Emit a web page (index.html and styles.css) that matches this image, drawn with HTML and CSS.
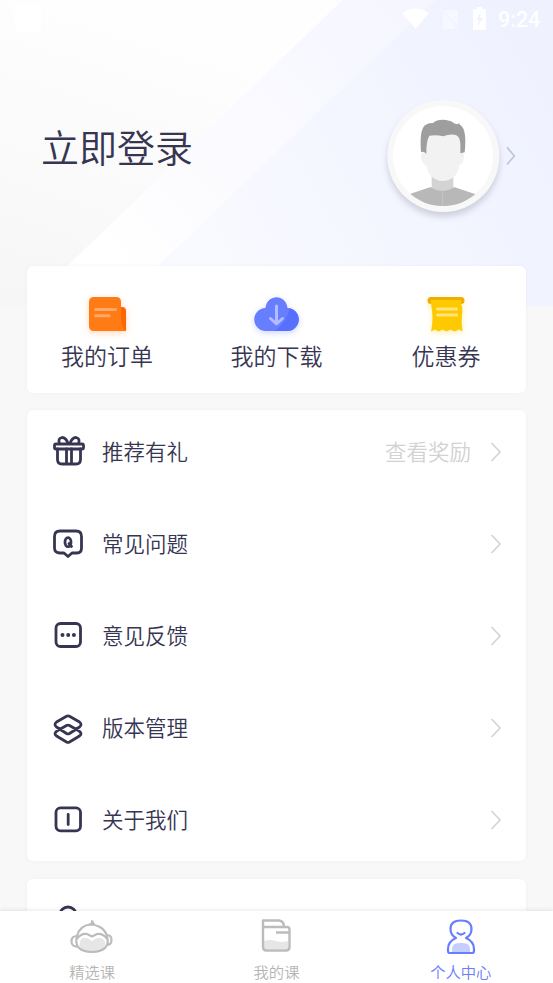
FILE: index.html
```html
<!DOCTYPE html>
<html lang="zh-CN">
<head>
<meta charset="utf-8">
<title>个人中心</title>
<link rel="stylesheet" href="styles.css">
</head>
<body>
<div class="app">
  <main class="page">
    <header class="hero">
      <svg class="hero-art" viewBox="0 0 553 307" preserveAspectRatio="none">
        <defs>
          <linearGradient id="grey" x1="0" y1="1" x2="0.45" y2="0.2"><stop offset="0" stop-color="#f6f6f6"/><stop offset="1" stop-color="#fefefe"/></linearGradient>
          <linearGradient id="blue" gradientUnits="userSpaceOnUse" x1="200" y1="270" x2="540" y2="80"><stop offset="0" stop-color="#f9faff"/><stop offset=".6" stop-color="#f3f5ff"/><stop offset="1" stop-color="#eff1ff"/></linearGradient>
          <linearGradient id="band" gradientUnits="userSpaceOnUse" x1="110" y1="266" x2="400" y2="0"><stop offset="0" stop-color="#fff"/><stop offset=".4" stop-color="#fbfbff"/><stop offset="1" stop-color="#f5f6ff"/></linearGradient>
        </defs>
        <path d="M0 0H553V307H0Z" fill="url(#grey)"/>
        <path d="M342.5 0H553V307H25Z" fill="url(#band)"/>
        <path d="M435 0H553V307H115Z" fill="url(#blue)"/>
      </svg>
      <div class="hero-body">
        <div class="status">
          <span class="status-app"></span>
          <svg class="status-icons" width="90" height="24" viewBox="0 0 90 24" fill="#fff">
            <path d="M2 4Q15.500-5 29 4L15.500 20Z" transform="translate(0 2)"/>
            <path d="M45 3H58V19L43 4ZM43 6L57 22H43Z" opacity=".42"/>
            <path d="M40 3L58 22" stroke="#fff" opacity=".4"/>
            <path fill-rule="evenodd" d="M77 0H82V2H86V23H73V2H77ZM81 5L76 13H79L78 19L83 11H80Z"/>
          </svg>
          <span class="clock">9:24</span>
        </div>
        <div class="profile">
          <h1 class="login">立即登录</h1>
          <svg class="avatar" width="160" height="135" viewBox="0 0 480 405">
            <defs><clipPath id="face"><circle cx="204" cy="198" r="150"/></clipPath></defs>
            <circle class="avatar-ring" cx="205" cy="198" r="168" fill="#f8f8f8"/>
            <circle cx="204" cy="198" r="150" fill="#fff"/>
            <g clip-path="url(#face)">
              <path d="M170 255H235V291L300 313V360H107V313L170 291Z" fill="#d3d3d3"/>
              <path d="M98 314L165 292Q203 314 239 292L310 316V360H98Z" fill="#b8b8b8"/>
              <path d="M203 303V350" stroke="#ccc" stroke-width="2"/>
            </g>
            <path d="M153 130H256V186Q267 183 267 196Q267 224 253 224C251 257 227 273 203 273C178 273 157 255 154 226Q139 222 138 197Q138 184 153 187Z" fill="#f2f2f2"/>
            <path d="M138 186C136 150 136 118 150 106Q161 98 174 99Q187 87 213 90Q230 92 240 101Q250 105 253 98Q252 105 257 106C270 115 274 145 269 187L256 190C256 160 259 139 239 134Q220 132 205 139Q185 134 163 137Q153 154 154 192Q148 184 138 186Z" fill="#9e9e9e"/>
            <path d="M396 172L418 198L396 223" fill="none" stroke="#bcc5da" stroke-width="5"/>
          </svg>
        </div>
      </div>
    </header>

    <section class="card shortcuts">
      <a class="shortcut">
        <svg class="glow orange" width="48" height="40" viewBox="0 0 48 40"><path d="M34 12H39Q43 12 43 16V36H32Z" fill="#f60"/><path d="M11 2H33Q38 2 38 7V24Q38 32 43 36H11Q6 36 6 31V7Q6 2 11 2Z" fill="#ff7b16"/><path d="M12.500 14.500H32.500M12.500 20.700H26" stroke="#ffa967" stroke-width="3" stroke-linecap="round"/></svg>
        <span>我的订单</span>
      </a>
      <a class="shortcut">
        <svg class="glow violet" width="48" height="40" viewBox="0 0 48 40"><defs><clipPath id="cloud"><path d="M13 36A11.500 11.500 0 0 1 12.500 13C14 -1.500 33 -1.500 34.500 13A11.500 11.500 0 0 1 34 36Z"/></clipPath></defs><g clip-path="url(#cloud)"><path d="M0 0H48V40H0Z" fill="#677eff"/><path d="M37 10Q35 28 20 37H48V10Z" fill="#5770ff"/></g><path d="M23.500 11V28M17.500 23.500L23.500 29L29.500 23.500" fill="none" stroke="#b2bdff" stroke-width="3" stroke-linecap="round" stroke-linejoin="round"/></svg>
        <span>我的下载</span>
      </a>
      <a class="shortcut">
        <svg class="glow yellow" width="48" height="40" viewBox="0 0 48 40"><rect x="5.500" y="2" width="37" height="7" rx="3.500" fill="#efad00"/><path d="M9 5H39V9Q41 12 40 20Q39 28 40.500 36.500L37 34.500L32.500 36.500L28.500 34.500L24.500 36.500L20.500 34.500L16.500 36.500L13 34.500L9 36.500Q12 23 9 9Z" fill="#ffc900"/><path d="M15.500 14H34.500M15.500 20H34.500" stroke="#ffe37e" stroke-width="3" stroke-linecap="round"/></svg>
        <span>优惠券</span>
      </a>
    </section>

    <section class="card menu">
      <a class="row">
        <svg class="icon" viewBox="0 0 34 34"><rect x="2.500" y="9" width="29" height="5" rx="1.500"/><path d="M5.500 14V24.500Q5.500 29 10 29H24Q28.500 29 28.500 24.500V14M14.500 14V28M19.500 14V28M16 8.500Q14 2.500 10 2.500Q5.500 3.500 7.500 8.500M18 8.500Q20 2.500 24 2.500Q28.500 3.500 26.500 8.500"/></svg>
        <span class="label">推荐有礼</span><span class="hint">查看奖励</span>
        <svg class="chevron" viewBox="0 0 12 20"><path d="M1.500 1L10 10L1.500 19"/></svg>
      </a>
      <a class="row">
        <svg class="icon" viewBox="0 0 34 34"><path d="M8 4H24Q29.500 4 29.500 9.500V21Q29.500 26 25 26H20L16 29.500L12 26H8Q2.500 26 2.500 21V9.500Q2.500 4 8 4Z"/><ellipse cx="16" cy="15.200" rx="3" ry="4.500"/><path d="M17 16.500L19.500 19.500"/></svg>
        <span class="label">常见问题</span>
        <svg class="chevron" viewBox="0 0 12 20"><path d="M1.500 1L10 10L1.500 19"/></svg>
      </a>
      <a class="row">
        <svg class="icon" viewBox="0 0 34 34"><rect x="4" y="4.500" width="24.500" height="23" rx="4.500"/><path class="dots" d="M10.500 16H10.510M16.200 16H16.210M21.900 16H21.910"/></svg>
        <span class="label">意见反馈</span>
        <svg class="chevron" viewBox="0 0 12 20"><path d="M1.500 1L10 10L1.500 19"/></svg>
      </a>
      <a class="row">
        <svg class="icon" viewBox="0 0 34 34"><path d="M14.500 5.300L4.500 11Q1.500 13.500 4.500 16L14.500 22.500Q16 23.300 17.500 22.500L27.500 16Q30.500 13.500 27.500 11L17.500 5.300Q16 4.500 14.500 5.300ZM14.500 14.500L4.500 20.300Q1.500 22.700 4.500 25L14.500 31Q16 31.800 17.500 31L27.500 25Q30.500 22.700 27.500 20.300L17.500 14.500Q16 13.700 14.500 14.500Z"/></svg>
        <span class="label">版本管理</span>
        <svg class="chevron" viewBox="0 0 12 20"><path d="M1.500 1L10 10L1.500 19"/></svg>
      </a>
      <a class="row">
        <svg class="icon" viewBox="0 0 34 34"><rect x="4" y="4.800" width="24.500" height="23" rx="4.500"/><path d="M16.200 11.500V21.500"/></svg>
        <span class="label">关于我们</span>
        <svg class="chevron" viewBox="0 0 12 20"><path d="M1.500 1L10 10L1.500 19"/></svg>
      </a>
    </section>

    <section class="card menu more">
      <a class="row">
        <svg class="icon" viewBox="0 0 34 34"><path d="M8 17V11A8 8 0 0 1 24 11V17M8 12H5V20H8ZM24 12H27V20H24Z"/></svg>
        <span class="label">客服热线</span>
        <svg class="chevron" viewBox="0 0 12 20"><path d="M1.500 1L10 10L1.500 19"/></svg>
      </a>
    </section>
  </main>

  <nav class="tabs">
    <a class="tab">
      <svg width="48" height="48" viewBox="0 0 48 48"><path d="M12 27Q13 22 19 23L24 26L29 23Q35 22 37 27Q38 34 32 36Q24 39 16 36Q10 33 12 27Z" fill="#e6e6e6"/><path d="M9 21Q12 10 23 9.500Q27 9.500 32 12Q37 15 39 21Q43 36.500 24 37Q5 36.500 9 21ZM9 24Q13 18 19 19L24 21.500L29 19Q35 18 39 24M9 21Q3.500 21 3.500 26.500T10 31.500M39 20Q43.500 20 43.500 25T39 29.500M21 9.500L24 8.500V6L26 9.500" fill="none" stroke="#bcbcbc" stroke-width="2.200" stroke-linejoin="round"/></svg>
      <span>精选课</span>
    </a>
    <a class="tab">
      <svg width="48" height="48" viewBox="0 0 48 48"><path d="M12 26Q18 24 24 26T36 26V34H12Z" fill="#e6e6e6"/><path d="M11 12V5.500H27Q32 6 32 12M11 12H35Q37.500 12 37.500 14.500V32Q37.500 35.500 34 35.500H14.500Q11 35.500 11 32V12M37 17.500H24" fill="none" stroke="#bcbcbc" stroke-width="2.400" stroke-linejoin="round"/></svg>
      <span>我的课</span>
    </a>
    <a class="tab active">
      <svg width="48" height="48" viewBox="0 0 48 48"><path d="M15 37V34Q15 28 22 28H26Q33 28 33 34V37Z" fill="#c6ceff"/><path d="M19 23Q13.500 20 13.500 14Q13.500 5.500 24 5.500T34.500 14Q34.500 20 29 23Q37 26.500 37 34V36Q37 38 35 38H13Q11 38 11 36V34Q11 26.500 19 23ZM20.500 18Q24 21 27.500 18" fill="none" stroke="#677eff" stroke-width="2.200" stroke-linejoin="round" stroke-linecap="round"/></svg>
      <span>个人中心</span>
    </a>
  </nav>
</div>
</body>
</html>
```
FILE: styles.css
```css
* { box-sizing: border-box; }
body {
  margin: 0;
  background: #f8f8f8;
  color: #373652;
  font-family: "Noto Sans CJK SC", sans-serif;
  font-weight: 350;
}
svg { display: block; flex: none; }
.app { display: flex; flex-direction: column; height: 983px; width: 553px; overflow: hidden; }
.page { flex: 1; min-height: 0; overflow: hidden; }

.hero { display: grid; height: 307px; margin-bottom: -41px; }
.hero-art, .hero-body { grid-area: 1 / 1; }
.hero-art { width: 553px; height: 307px; }
.status { display: flex; align-items: center; height: 38px; padding: 0 12px 0 15px; }
.status-app { width: 26px; height: 26px; border-radius: 4px; background: #fff; opacity: .9; margin-right: auto; }
.status-icons { margin-right: -1px; }
.clock { font: 500 21.5px/24px Roboto, sans-serif; color: #fff; margin: 2px 0 0 9px; width: 43px; white-space: nowrap; }
.profile { display: flex; justify-content: space-between; padding: 52px 18px 0 41px; }
.login { margin: 28px 0 0; font-size: 38px; line-height: 56px; font-weight: inherit; }
.avatar { overflow: visible; }
.avatar-ring { filter: drop-shadow(0 14px 10px rgba(60, 60, 90, .2)); }

.card { position: relative; margin: 0 27px 18px; background: #fff; border-radius: 6px; box-shadow: 0 0 4px rgba(0, 0, 0, .04); }
.shortcuts { display: flex; justify-content: space-between; height: 127px; padding: 29px 34px 0; margin-bottom: 17px; }
.shortcut { display: flex; flex-direction: column; align-items: center; width: 92px; font-size: 23px; line-height: 34px; white-space: nowrap; }
.shortcut span { margin-top: 3px; }
.orange { filter: drop-shadow(0 2px 3px rgba(255, 123, 22, .3)); }
.violet { filter: drop-shadow(0 2px 3px rgba(103, 126, 255, .3)); }
.yellow { filter: drop-shadow(0 2px 3px rgba(255, 201, 0, .3)); }

.menu { display: flex; flex-direction: column; gap: 8px; height: 451px; }
.row { display: flex; flex: none; align-items: center; height: 84px; padding: 0 24px 0 25px; font-size: 21.5px; line-height: 32px; }
.icon { width: 34px; height: 34px; fill: none; stroke: #373652; stroke-width: 2.8; stroke-linejoin: round; stroke-linecap: round; }
.dots { stroke-width: 4; }
.label { margin: -2px auto 0 16px; }
.more .label { margin-top: 0; }
.hint { color: #d2d2d2; margin: -2px 19px 0 0; }
.chevron { width: 12px; height: 20px; fill: none; stroke: #d3d5dc; stroke-width: 1.7; }

.tabs { position: relative; display: flex; height: 72px; background: #fff; box-shadow: 0 -1px 4px rgba(0, 0, 0, .09); }
.tab { flex: 1; display: flex; flex-direction: column; align-items: center; padding-top: 4px; color: #b5b5b5; font-size: 15.3px; line-height: 22px; }
.tab span { margin-top: -3px; }
.tab.active { color: #677eff; }
```
